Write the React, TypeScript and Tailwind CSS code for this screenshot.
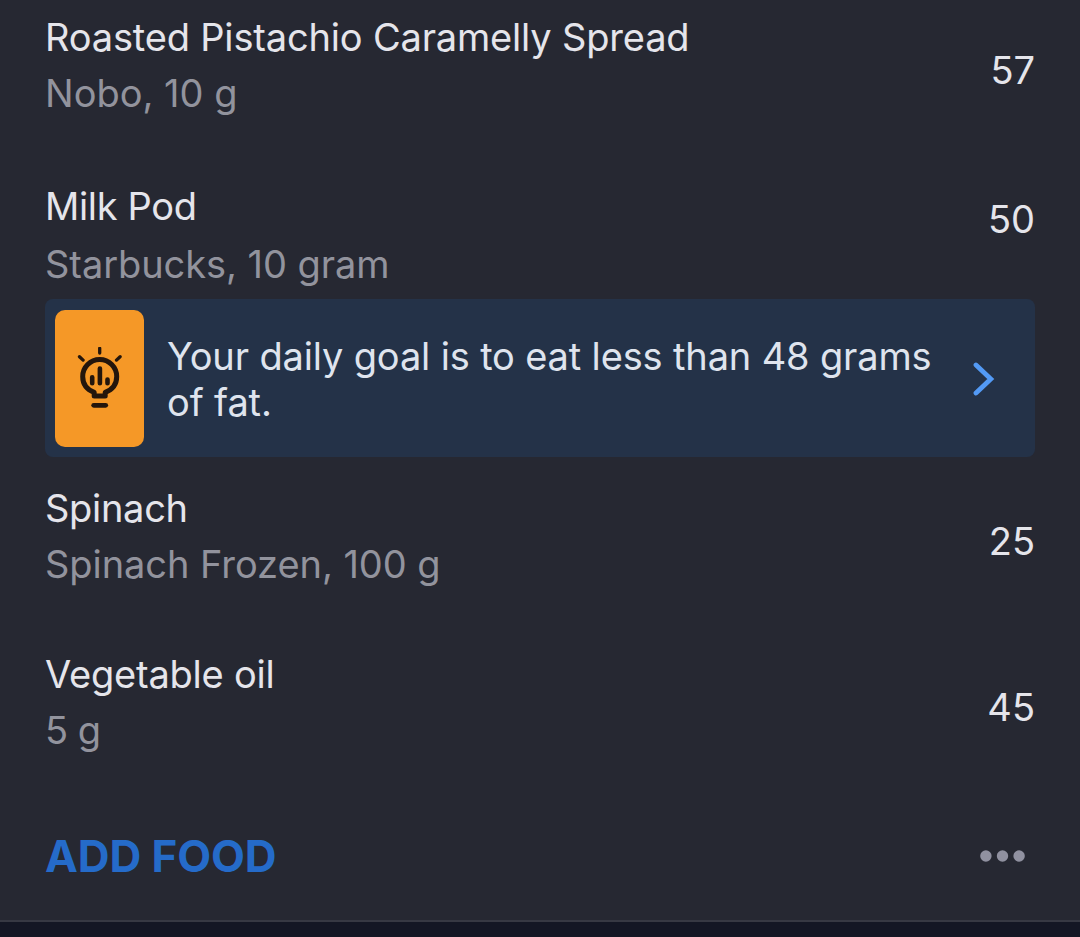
type Food = {
  name: string;
  detail: string;
  calories: number;
  rowClass: string;
  nameClass: string;
  detailClass: string;
  caloriesClass: string;
};

const foods: Food[] = [
  {
    name: "Roasted Pistachio Caramelly Spread",
    detail: "Nobo, 10 g",
    calories: 57,
    rowClass: "mt-[9px] leading-[56px]",
    nameClass: "tracking-[-0.17px]",
    detailClass: "tracking-[0px]",
    caloriesClass: "mt-[33px]",
  },
  {
    name: "Milk Pod",
    detail: "Starbucks, 10 gram",
    calories: 50,
    rowClass: "mt-[56px] leading-[58px]",
    nameClass: "tracking-[-0.35px]",
    detailClass: "tracking-[-0.06px]",
    caloriesClass: "mt-[14px]",
  },
  {
    name: "Spinach",
    detail: "Spinach Frozen, 100 g",
    calories: 25,
    rowClass: "mt-[23px] leading-[56px]",
    nameClass: "tracking-[-0.3px]",
    detailClass: "tracking-[-0.06px]",
    caloriesClass: "mt-[33px]",
  },
  {
    name: "Vegetable oil",
    detail: "5 g",
    calories: 45,
    rowClass: "mt-[54px] leading-[56px]",
    nameClass: "tracking-[-0.22px]",
    detailClass: "tracking-[-0.5px]",
    caloriesClass: "mt-[33px]",
  },
];

function FoodRow({ food }: { food: Food }) {
  return (
    <div className={`flex items-start justify-between pl-[45px] pr-[45px] text-[38px] whitespace-nowrap ${food.rowClass}`}>
      <div>
        <h3 className={food.nameClass}>{food.name}</h3>
        <p className={`text-[#92939d] ${food.detailClass}`}>{food.detail}</p>
      </div>
      <span className={`leading-[56px] ${food.caloriesClass}`}>{food.calories}</span>
    </div>
  );
}

function BulbIcon() {
  return (
    <svg viewBox="0 0 46 64" className="h-16 w-[46px]" fill="none" stroke="#24160c" strokeLinecap="round" strokeLinejoin="round" aria-hidden>
      <path d="M22.700 1.300v4.700M2.500 9.700l3.600 3.400M43.100 9.700l-3.600 3.400" strokeWidth="3.300" />
      <path d="M17.200 49v-3.600C10.300 42.700 5.700 37 5.700 29.500a17 17 0 0 1 34 0C39.700 37 35.100 42.700 28.200 45.400V49z" strokeWidth="5" />
      <path d="M15.200 30.200v6M22.900 21.500v14.700M30.500 32.500v3.700" strokeWidth="4.600" />
      <path d="M16.700 58.300h12" strokeWidth="4.800" />
    </svg>
  );
}

function GoalTip() {
  return (
    <div className="mx-[45px] mt-[6px] flex h-[158px] items-center rounded-[8px] bg-[#243248] pl-[10px]">
      <div className="mt-px flex h-[137px] w-[89px] shrink-0 items-center justify-center rounded-[10px] bg-[#f59827]">
        <BulbIcon />
      </div>
      <p className="mt-[2px] ml-[23px] text-[38px] leading-[46px] tracking-[-0.15px] whitespace-nowrap text-[#dfe4ee]">
        Your daily goal is to eat less than 48 grams
        <br />
        of fat.
      </p>
      <svg viewBox="0 0 22 34" className="mt-[2px] mr-[40px] ml-auto h-[34px] w-[22px] shrink-0" fill="none" stroke="#539af5" strokeWidth="4.800" strokeLinecap="round" aria-hidden>
        <path d="M3 3l14.800 14L3 31" />
      </svg>
    </div>
  );
}

function MoreIcon() {
  return (
    <svg viewBox="0 0 46 12" className="h-3 w-[46px]" fill="#9091a0" aria-hidden>
      <circle cx="5.900" cy="6" r="5.700" />
      <circle cx="22.500" cy="6" r="5.700" />
      <circle cx="39.100" cy="6" r="5.700" />
    </svg>
  );
}

export default function App() {
  return (
    <div className="flex h-[937px] w-[1080px] flex-col overflow-hidden bg-[#262832] font-['Inter',sans-serif] text-[#e5e5eb]">
      <FoodRow food={foods[0]} />
      <FoodRow food={foods[1]} />
      <GoalTip />
      <FoodRow food={foods[2]} />
      <FoodRow food={foods[3]} />
      <div className="mt-[70px] flex h-14 items-center justify-between pr-[54px] pl-[45px]">
        <button className="text-[44px] leading-[56px] font-bold tracking-[-0.1px] text-[#256bc9]">ADD FOOD</button>
        <button aria-label="More options">
          <MoreIcon />
        </button>
      </div>
      <div className="mt-auto h-[17px] border-t-2 border-[#373843] bg-[#141624]" />
    </div>
  );
}
